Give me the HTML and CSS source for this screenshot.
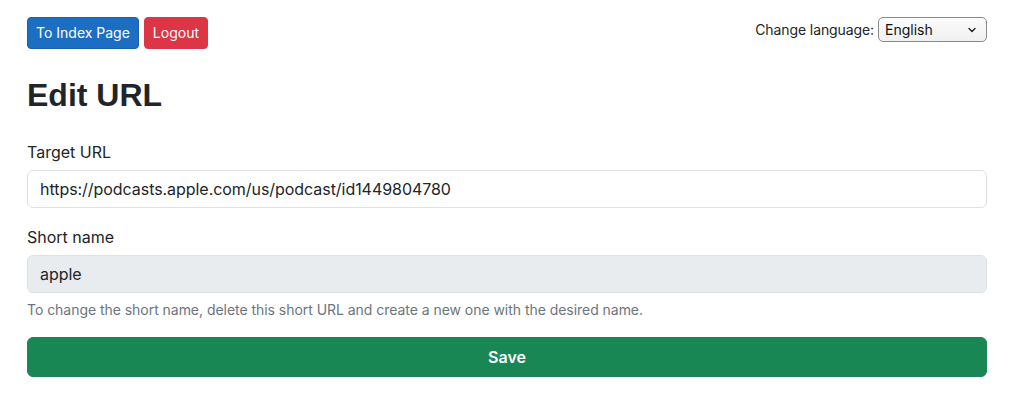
FILE: index.html
```html
<!DOCTYPE html>
<html lang="en">
<head>
<meta charset="utf-8">
<title>Edit URL</title>
<link rel="stylesheet" href="styles.css">
</head>
<body>
<div class="page">
  <div class="topbar">
    <div class="actions">
      <a class="btn btn-primary btn-sm" href="#">To Index Page</a>
      <a class="btn btn-danger btn-sm" href="#">Logout</a>
    </div>
    <div class="lang">
      <label class="lang-label" for="lang">Change language:</label>
      <div class="select-wrap">
        <select id="lang" class="lang-select">
          <option>English</option>
        </select>
        <svg class="chev" width="8" height="6" viewBox="0 0 8 6"><path d="M1 1.5 L4 4.5 L7 1.5" fill="none" stroke="#222" stroke-width="1.4" stroke-linecap="round" stroke-linejoin="round"/></svg>
      </div>
    </div>
  </div>

  <h1 class="title">Edit URL</h1>

  <form class="form">
    <div class="field">
      <label class="form-label" for="target">Target URL</label>
      <input id="target" class="form-control" type="text" value="https://podcasts.apple.com/us/podcast/id1449804780">
    </div>
    <div class="field">
      <label class="form-label" for="short">Short name</label>
      <input id="short" class="form-control" type="text" value="apple" disabled>
      <div class="form-text">To change the short name, delete this short URL and create a new one with the desired name.</div>
    </div>
    <button type="button" class="btn btn-success btn-block">Save</button>
  </form>
</div>
</body>
</html>
```

FILE: styles.css
```css
* { box-sizing: border-box; }

html, body {
  margin: 0;
  padding: 0;
  background: #fff;
  color: #212529;
  font-family: Inter, "Liberation Sans", Arial, sans-serif;
  font-size: 16px;
  line-height: 1.5;
}

.page {
  padding: 17px 30px 0 27px;
}

.topbar {
  display: flex;
  justify-content: space-between;
  align-items: flex-start;
}

.actions {
  display: flex;
  gap: 5px;
}

.btn {
  display: inline-block;
  border: 1px solid transparent;
  border-radius: 4px;
  color: #fff;
  text-decoration: none;
  font-family: inherit;
  text-align: center;
  cursor: pointer;
}

.btn-sm {
  font-size: 14px;
  line-height: 22px;
  padding: 4px 8px;
}

.btn-primary {
  background: #1b6ec2;
  border-color: #1861ac;
}

.btn-danger {
  background: #dc3545;
  border-color: #dc3545;
}

.btn-success {
  background: #198754;
  border-color: #198754;
}

.lang {
  display: flex;
  align-items: center;
  gap: 4px;
  font-size: 14px;
  letter-spacing: -0.1px;
}

.select-wrap {
  position: relative;
  width: 109px;
  height: 25px;
}

.lang-select {
  appearance: none;
  -webkit-appearance: none;
  width: 100%;
  height: 25px;
  border: 1px solid #8a8a8a;
  border-radius: 5px;
  background: linear-gradient(#fcfcfc, #f0f0f0);
  font-family: inherit;
  font-size: 14px;
  color: #111;
  padding: 0 20px 0 6px;
}

.chev {
  position: absolute;
  right: 11px;
  top: 10px;
  pointer-events: none;
}

.title {
  margin: 27px 0 0;
  font-family: "Liberation Sans", Arial, sans-serif;
  font-size: 32px;
  line-height: 38px;
  font-weight: bold;
  color: #212529;
}

.form {
  margin-top: 26px;
}

.field {
  margin-bottom: 17px;
}

.form-label {
  display: block;
  margin-bottom: 6px;
  font-size: 16px;
  line-height: 24px;
}

.form-control {
  display: block;
  width: 100%;
  height: 38px;
  padding: 6px 12px;
  font-family: inherit;
  font-size: 16px;
  line-height: 24px;
  letter-spacing: -0.05px;
  color: #212529;
  background: #fff;
  border: 1px solid #dee2e6;
  border-radius: 6px;
}

.form-control:disabled {
  background: #e9ecef;
  color: #212529;
  opacity: 1;
}

.form-text {
  margin-top: 6px;
  font-size: 14px;
  line-height: 21px;
  letter-spacing: -0.04px;
  color: #6c757d;
}

.btn-block {
  display: block;
  width: 100%;
  height: 40px;
  font-size: 16px;
  font-weight: 600;
  border-radius: 6px;
  padding: 0;
}
```
